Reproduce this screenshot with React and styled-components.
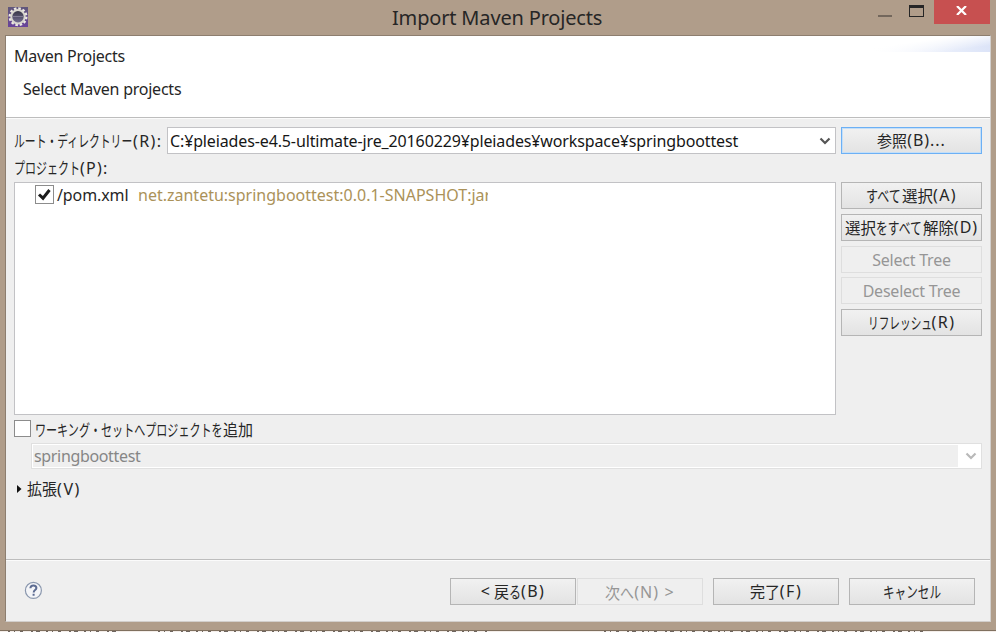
import React from "react";
import styled, { createGlobalStyle } from "styled-components";

const GlobalStyle = createGlobalStyle`
  * {
    box-sizing: border-box;
  }
  body {
    margin: 0;
    overflow: hidden;
  }
`;

const Window = styled.div`
  width: 996px;
  height: 632px;
  display: flex;
  flex-direction: column;
  background: #b09d8a;
  color: #262626;
  font: 16px/20px "Noto Sans", "Noto Sans CJK JP", sans-serif;
  white-space: nowrap;
`;

const TitleBar = styled.header`
  display: flex;
  height: 35px;
  flex: none;
  padding-left: 8px;
  svg {
    display: block;
  }
`;
const AppIcon = styled.div`
  width: 20px;
  padding-top: 7px;
`;
const Title = styled.h1`
  flex: 1;
  margin: 0;
  padding: 4px 0 0 364px;
  font-size: 20px;
  font-weight: 400;
  line-height: 28px;
  letter-spacing: -0.17px;
`;
const Controls = styled.div`
  display: flex;
  width: 118px;
`;
const Minimize = styled.div`
  width: 14px;
  height: 2px;
  margin: 15px 17px 0 0;
  background: #73675c;
`;
const Maximize = styled.div`
  width: 15px;
  height: 12px;
  margin: 5px 10px 0 0;
  border: 1px solid #262626;
  border-top-width: 3px;
`;
const Close = styled.div`
  width: 56px;
  height: 24px;
  padding: 6px 0 0 22px;
  background: #c75050;
`;

const Dialog = styled.main`
  display: flex;
  flex-direction: column;
  width: 986px;
  height: 587px;
  margin-left: 5px;
  border: 1px solid #d2cfcc;
  border-top-color: #8d7e6f;
  border-left-color: #8d7e6f;
  background: #efefef;
`;
const Banner = styled.section`
  display: flex;
  flex-direction: column;
  height: 82px;
  flex: none;
  padding: 10px 0 0 8px;
  border-bottom: 1px solid #bdbdbd;
  background: linear-gradient(to bottom right, #fff 36%, rgba(255, 255, 255, 0) 80%) 100% 0 / 116px 16px no-repeat,
    linear-gradient(to right, #fff, #dce4f8) 100% 0 / 116px 16px no-repeat, #fff;
`;
const Heading = styled.h2`
  margin: 0;
  font: inherit;
  letter-spacing: -0.27px;
`;
const Message = styled.p`
  margin: 13px 0 0 9px;
  letter-spacing: -0.24px;
`;

const Body = styled.section`
  display: flex;
  flex-direction: column;
  height: 441px;
  flex: none;
  padding: 8px 8px 0;
  border-top: 1px solid #fbfbfb;
`;
const Row = styled.div`
  display: flex;
  flex: none;
`;
const RootRow = styled(Row)`
  justify-content: space-between;
`;
const RootLabel = styled.label`
  width: 153px;
  padding-top: 3px;
`;
const Combo = styled.div`
  display: flex;
  align-items: center;
  justify-content: space-between;
  width: ${p => p.$width}px;
  height: ${p => p.$height}px;
  border: 1px solid ${p => (p.disabled ? "#e0e0e0" : "#c2c2c5")};
  box-shadow: ${p => (p.disabled ? "inset 0 0 0 1px #fff" : "none")};
  background: ${p =>
    p.disabled ? "linear-gradient(to right, #efefef 926px, #fff 926px)" : "#fff"};
  color: ${p => (p.disabled ? "#868686" : "#161616")};
  padding: ${p => (p.disabled ? "0 4px 1px 2px" : "0 4px 0 2px")};
  letter-spacing: ${p => (p.disabled ? "-0.34px" : "-0.13px")};
`;
const Button = styled.button`
  display: flex;
  align-items: center;
  justify-content: center;
  flex: none;
  width: ${p => p.$width || 141}px;
  height: 27px;
  padding: 0 0 1px;
  border: 1px solid #b5b5b5;
  background: linear-gradient(#f1f1f1, #e3e3e3);
  color: #262626;
  font: inherit;
  white-space: pre;
  &:disabled {
    padding: 1px 0 0;
    border-color: #dedede;
    background: #efefef;
    color: #969696;
    letter-spacing: -0.22px;
  }
`;
const BrowseButton = styled(Button)`
  && {
    border: 1px solid #6cb0f5;
    box-shadow: inset 0 0 0 1px #c4dff8;
  }
`;

const ListLabel = styled.label`
  height: 28px;
  padding-top: 3px;
`;
const ProjectList = styled.div`
  display: flex;
  width: 822px;
  height: 233px;
  margin-right: 5px;
  padding: 2px 0 0 20px;
  border: 1px solid #c2c2c5;
  background: #fff;
`;
const Actions = styled.div`
  display: flex;
  flex-direction: column;
  gap: 4.8px;
`;
const CheckBox = styled.span`
  flex: none;
  width: ${p => p.$size}px;
  height: ${p => p.$size}px;
  border: 1px solid #8c8c8c;
  background: #fff;
  svg {
    display: block;
  }
`;
const FileName = styled.span`
  width: 84px;
  padding-left: 3px;
  letter-spacing: -0.1px;
`;
const Artifact = styled.span`
  width: 350px;
  height: 22px;
  overflow: hidden;
  color: #ab9259;
`;
const WorkingSet = styled(Row)`
  height: 28px;
  gap: 4px;
  padding-top: 5px;
`;
const WorkingSetLabel = styled.label`
  margin-top: -1px;
`;
const Indent = styled(Row)`
  padding-left: 17px;
`;
const Advanced = styled(Row)`
  gap: 5px;
  padding: 9px 0 0 3px;
  svg {
    margin-top: 6px;
  }
`;

const Footer = styled.footer`
  display: flex;
  flex: 1;
  padding: 18px 15px 0 18px;
  border-top: 1px solid #bdbdbd;
  box-shadow: inset 0 1px #fbfbfb;
`;
const Help = styled.div`
  flex: 1;
  padding-top: 3px;
`;
const Pair = styled(Row)`
  gap: 1px;
  margin-right: 10px;
`;
const Finish = styled(Row)`
  gap: 10px;
`;

// Meiryo UI style squeezed kana: natural width is one em per character
const Squeezed = styled.span`
  display: inline-block;
  width: ${p => p.$width}px;
  font-family: "Noto Sans CJK JP", sans-serif;
  letter-spacing: 0;
  transform: scaleX(${p => p.$width / (p.children.length * 16)});
  transform-origin: 0 50%;
`;
const Key = styled.span`
  letter-spacing: ${p => p.$spacing || 1.4}px;
`;

const Backdrop = styled.div`
  height: 2px;
  margin-top: auto;
  border-top: 1px solid #80705f;
  background: #f4eeea;
  svg {
    display: block;
  }
`;

const Gear = () => (
  <svg width="20" height="20" viewBox="0 0 20 20">
    <defs>
      <linearGradient id="tile" x2="0" y2="1">
        <stop offset="0" stopColor="#60577a" />
        <stop offset="1" stopColor="#69439b" />
      </linearGradient>
      <linearGradient id="lens" x2="0" y2="1">
        <stop offset="0" stopColor="#343241" />
        <stop offset="1" stopColor="#777096" />
      </linearGradient>
    </defs>
    <path fill="url(#tile)" d="M0 0h20v20H0z" />
    <circle cx="10" cy="9.7" r="8.2" fill="none" stroke="#eeeae4" strokeWidth="2.6" strokeDasharray="2.5 1.794" />
    <circle cx="10" cy="9.7" r="6.7" fill="url(#lens)" stroke="#d9d6cf" strokeWidth="2" />
    <path d="M5 9.5h10" stroke="#8d86a0" strokeWidth=".8" />
  </svg>
);

const Chevron = ({ color }) => (
  <svg width="12" height="8" viewBox="0 0 12 8">
    <path d="M1.5 1.5 6 6l4.5-4.5" fill="none" stroke={color} strokeWidth="2.2" />
  </svg>
);

const HelpIcon = () => (
  <svg width="18" height="18" viewBox="0 0 18 18">
    <circle cx="9.4" cy="9.4" r="8" fill="#f4f5f8" stroke="#8b98ae" strokeWidth="1.2" />
    <path
      d="M6.4 7.2C6.4 5.3 7.6 4.4 9.4 4.4s3 1 3 2.6c0 2.1-2.7 2-2.7 4.4M9.6 12.8v1.9"
      fill="none"
      stroke="#5d6c92"
      strokeWidth="2"
    />
  </svg>
);

export default () => {
  return (
    <Window>
      <GlobalStyle />
      <TitleBar>
        <AppIcon>
          <Gear />
        </AppIcon>
        <Title>Import Maven Projects</Title>
        <Controls>
          <Minimize />
          <Maximize />
          <Close>
            <svg width="11" height="9" viewBox="0 0 11 9">
              <path d="M1 0l9 9M10 0L1 9" stroke="#fff" strokeWidth="2.2" />
            </svg>
          </Close>
        </Controls>
      </TitleBar>
      <Dialog>
        <Banner>
          <Heading>Maven Projects</Heading>
          <Message>Select Maven projects</Message>
        </Banner>
        <Body>
          <RootRow>
            <Row>
              <RootLabel>
                <Squeezed $width={119}>ルート・ディレクトリー</Squeezed>
                <Key>(R):</Key>
              </RootLabel>
              <Combo $width={669} $height={27}>
                C:¥pleiades-e4.5-ultimate-jre_20160229¥pleiades¥workspace¥springboottest
                <Chevron color="#555" />
              </Combo>
            </Row>
            <BrowseButton>
              <Squeezed $width={30}>参照</Squeezed>
              <Key $spacing={0.9}>(B)...</Key>
            </BrowseButton>
          </RootRow>
          <ListLabel>
            <Squeezed $width={66}>プロジェクト</Squeezed>
            <Key $spacing={1.2}>(P):</Key>
          </ListLabel>
          <RootRow>
            <ProjectList>
              <CheckBox $size={19}>
                <svg width="17" height="17" viewBox="0 0 17 17">
                  <path d="M3 8.5l4 3.7L13.5 4" fill="none" stroke="#1c1c1c" strokeWidth="3" />
                </svg>
              </CheckBox>
              <FileName>/pom.xml</FileName>
              <Artifact>net.zantetu:springboottest:0.0.1-SNAPSHOT:jar</Artifact>
            </ProjectList>
            <Actions>
              <Button>
                <Squeezed $width={36}>すべて</Squeezed>
                <Squeezed $width={31}>選択</Squeezed>
                <Key>(A)</Key>
              </Button>
              <Button>
                <Squeezed $width={31}>選択</Squeezed>
                <Squeezed $width={47}>をすべて</Squeezed>
                <Squeezed $width={31}>解除</Squeezed>
                <Key $spacing={1}>(D)</Key>
              </Button>
              <Button disabled>Select Tree</Button>
              <Button disabled>Deselect Tree</Button>
              <Button>
                <Squeezed $width={64}>リフレッシュ</Squeezed>
                <Key>(R)</Key>
              </Button>
            </Actions>
          </RootRow>
          <WorkingSet>
            <CheckBox $size={17} />
            <WorkingSetLabel>
              <Squeezed $width={188}>ワーキング・セットへプロジェクトを</Squeezed>
              <Squeezed $width={30}>追加</Squeezed>
            </WorkingSetLabel>
          </WorkingSet>
          <Indent>
            <Combo disabled $width={951} $height={26}>
              springboottest
              <Chevron color="#b9b9b9" />
            </Combo>
          </Indent>
          <Advanced>
            <svg width="5" height="10" viewBox="0 0 5 10">
              <path d="M0 1l4.5 4L0 9z" fill="#111" />
            </svg>
            <span>
              <Squeezed $width={30}>拡張</Squeezed>
              <Key $spacing={1.6}>(V)</Key>
            </span>
          </Advanced>
        </Body>
        <Footer>
          <Help>
            <HelpIcon />
          </Help>
          <Pair>
            <Button $width={126}>
              {"< "}
              <Squeezed $width={15}>戻</Squeezed>
              <Squeezed $width={12}>る</Squeezed>
              <Key>(B)</Key>
            </Button>
            <Button $width={126} disabled>
              <Squeezed $width={15}>次</Squeezed>
              <Squeezed $width={14}>へ</Squeezed>
              <Key $spacing={1.1}>(N) &gt;</Key>
            </Button>
          </Pair>
          <Finish>
            <Button $width={126}>
              <Squeezed $width={30}>完了</Squeezed>
              <Key>(F)</Key>
            </Button>
            <Button $width={126}>
              <Squeezed $width={58}>キャンセル</Squeezed>
            </Button>
          </Finish>
        </Footer>
      </Dialog>
      <Backdrop>
        <svg width="996" height="1">
          <path
            d="M8 .5h112M158 .5h330M604 .5h326"
            stroke="#6f6660"
            strokeDasharray="2 4 1 5 3 8 2 3 4 6"
          />
        </svg>
      </Backdrop>
    </Window>
  );
};
